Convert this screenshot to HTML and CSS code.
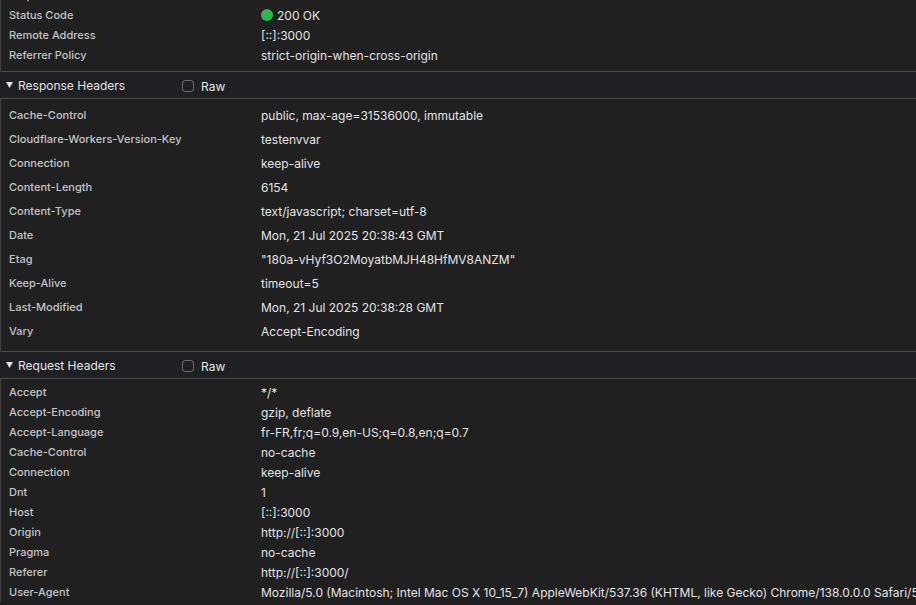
FILE: index.html
```html
<!DOCTYPE html>
<html>

<head>
    <title>Headers</title>
    <link rel="stylesheet" href="styles.css">
</head>

<body>
    <div class="panel">
        <div class="section general">
            <div class="row"><div class="key">Request Method</div><div class="val">GET</div></div>
            <div class="row"><div class="key">Status Code</div><div class="val"><span class="dot"></span>200 OK</div></div>
            <div class="row"><div class="key">Remote Address</div><div class="val">[::]:3000</div></div>
            <div class="row"><div class="key">Referrer Policy</div><div class="val">strict-origin-when-cross-origin</div></div>
        </div>

        <div class="header">
            <div class="title">
                <svg class="arrow" width="7" height="6" viewBox="0 0 7 6"><path d="M0 0H7L3.5 6Z" fill="#e3e3e3"/></svg>
                Response Headers
            </div>
            <label class="raw"><span class="box"></span>Raw</label>
        </div>
        <div class="section wide">
            <div class="row"><div class="key">Cache-Control</div><div class="val">public, max-age=31536000, immutable</div></div>
            <div class="row"><div class="key">Cloudflare-Workers-Version-Key</div><div class="val">testenvvar</div></div>
            <div class="row"><div class="key">Connection</div><div class="val">keep-alive</div></div>
            <div class="row"><div class="key">Content-Length</div><div class="val">6154</div></div>
            <div class="row"><div class="key">Content-Type</div><div class="val">text/javascript; charset=utf-8</div></div>
            <div class="row"><div class="key">Date</div><div class="val">Mon, 21 Jul 2025 20:38:43 GMT</div></div>
            <div class="row"><div class="key">Etag</div><div class="val">"180a-vHyf3O2MoyatbMJH48HfMV8ANZM"</div></div>
            <div class="row"><div class="key">Keep-Alive</div><div class="val">timeout=5</div></div>
            <div class="row"><div class="key">Last-Modified</div><div class="val">Mon, 21 Jul 2025 20:38:28 GMT</div></div>
            <div class="row"><div class="key">Vary</div><div class="val">Accept-Encoding</div></div>
        </div>

        <div class="header">
            <div class="title">
                <svg class="arrow" width="7" height="6" viewBox="0 0 7 6"><path d="M0 0H7L3.5 6Z" fill="#e3e3e3"/></svg>
                Request Headers
            </div>
            <label class="raw"><span class="box"></span>Raw</label>
        </div>
        <div class="section request">
            <div class="row"><div class="key">Accept</div><div class="val">*/*</div></div>
            <div class="row"><div class="key">Accept-Encoding</div><div class="val">gzip, deflate</div></div>
            <div class="row"><div class="key">Accept-Language</div><div class="val">fr-FR,fr;q=0.9,en-US;q=0.8,en;q=0.7</div></div>
            <div class="row"><div class="key">Cache-Control</div><div class="val">no-cache</div></div>
            <div class="row"><div class="key">Connection</div><div class="val">keep-alive</div></div>
            <div class="row"><div class="key">Dnt</div><div class="val">1</div></div>
            <div class="row"><div class="key">Host</div><div class="val">[::]:3000</div></div>
            <div class="row"><div class="key">Origin</div><div class="val">http://[::]:3000</div></div>
            <div class="row"><div class="key">Pragma</div><div class="val">no-cache</div></div>
            <div class="row"><div class="key">Referer</div><div class="val">http://[::]:3000/</div></div>
            <div class="row"><div class="key">User-Agent</div><div class="val">Mozilla/5.0 (Macintosh; Intel Mac OS X 10_15_7) AppleWebKit/537.36 (KHTML, like Gecko) Chrome/138.0.0.0 Safari/537.36</div></div>
        </div>
    </div>
</body>

</html>
```

FILE: styles.css
```css
body,
html {
    margin: 0;
    padding: 0;
    width: 100%;
    height: 100%;
    overflow: hidden;
    background-color: #202020;
}

.panel {
    margin-top: -15px;
    font-family: Inter, "Liberation Sans", sans-serif;
    color: #e3e3e3;
}

.section {
    border-left: 1px solid #3f3f3f;
}

.general {
    padding-bottom: 6px;
    border-bottom: 1px solid #4a4a4a;
}

.wide {
    padding: 4px 0 8px 0;
    border-bottom: 1px solid #4a4a4a;
}

.request {
    padding-top: 3px;
}

.row {
    display: flex;
    align-items: center;
    height: 20px;
    white-space: nowrap;
}

.wide .row {
    height: 24px;
}

.key {
    width: 252px;
    flex-shrink: 0;
    padding-left: 8px;
    font-size: 11px;
    font-weight: 500;
    color: #c4c4c4;
}

.val {
    display: flex;
    align-items: center;
    font-size: 12px;
    color: #e3e3e3;
}

.dot {
    width: 12px;
    height: 12px;
    border-radius: 50%;
    background-color: #2eb84e;
    margin-right: 4px;
}

.header {
    display: flex;
    align-items: center;
    height: 26px;
    background-color: #1f2023;
    border-bottom: 1px solid #4a4a4a;
    font-size: 12px;
}

.title {
    display: flex;
    align-items: center;
    width: 182px;
}

.arrow {
    margin: 0 5px 0 6px;
}

.raw {
    display: flex;
    align-items: center;
    padding-top: 2px;
    color: #e3e3e3;
}

.box {
    width: 10px;
    height: 10px;
    border: 1px solid #6a6a6a;
    border-radius: 3px;
    margin-right: 7px;
}
```
